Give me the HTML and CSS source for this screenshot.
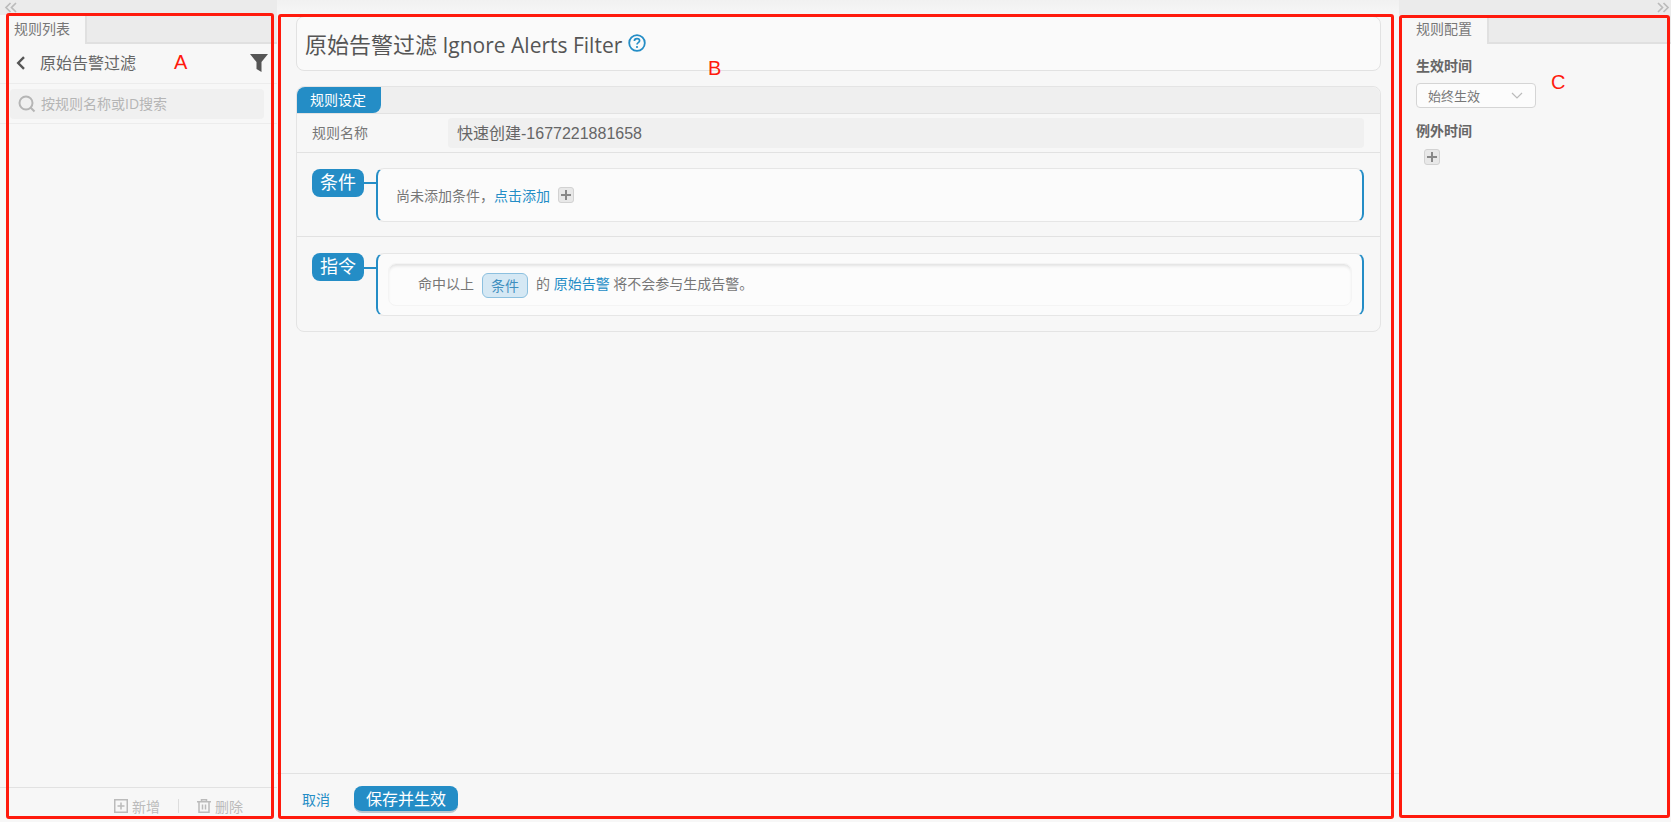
FILE: index.html
```html
<!DOCTYPE html>
<html lang="zh-CN">
<head>
  <meta charset="UTF-8" />
  <title>原始告警过滤</title>
  <link rel="stylesheet" href="styles.css">
</head>
<body>

<div class="page">
  <aside class="left">
    <div class="collapse-bar">
      <svg width="14" height="11" viewBox="0 0 14 11"><path d="M6.500 1 2 5.500 6.500 10M12 1 7.500 5.500 12 10" fill="none" stroke="#bbb" stroke-width="1.700"/></svg>
    </div>
    <div class="tabs">
      <div class="tab">规则列表</div>
    </div>
    <div class="list-head">
      <svg width="10" height="14" viewBox="0 0 10 14"><path d="M8 1.200 2.200 7 8 12.800" fill="none" stroke="#555" stroke-width="2.400"/></svg>
      <span class="list-title">原始告警过滤</span>
      <svg class="filter" width="18" height="18" viewBox="0 0 18 18"><path d="M0 0h18L11.500 8v10l-5-3V8z" fill="#555"/></svg>
    </div>
    <div class="search-row">
      <div class="search">
        <svg width="18" height="18" viewBox="0 0 18 18"><circle cx="8" cy="8" r="6.500" fill="none" stroke="#b5b5b5" stroke-width="2"/><path d="m12.500 12.500 4 4" stroke="#b5b5b5" stroke-width="2"/></svg>
        <span class="search-text">按规则名称或ID搜索</span>
      </div>
    </div>
    <div class="list-body"></div>
    <div class="list-foot">
      <span class="foot-btn">
        <svg width="14" height="14" viewBox="0 0 14 14"><path d="M.75.75h12.500v12.500H.75zM7 3.500v7M3.500 7h7" fill="none" stroke="#bbb" stroke-width="1.500"/></svg>
        新增
      </span>
      <span class="foot-sep"></span>
      <span class="foot-btn">
        <svg width="14" height="14" viewBox="0 0 14 14"><path d="M0 2.750h14M4.500 2.500V.75h5V2.500M2 3v10.250h10V3M5.500 5.500v5M8.500 5.500v5" fill="none" stroke="#bbb" stroke-width="1.500"/></svg>
        删除
      </span>
    </div>
  </aside>

  <main class="center">
    <div class="center-top"></div>
    <div class="center-body">
      <div class="title-card">
        <h1><span class="title-cn">原始告警过滤</span> Ignore Alerts Filter</h1>
        <svg width="18" height="18" viewBox="0 0 18 18"><circle cx="9" cy="9" r="7.800" fill="none" stroke="#248dc6" stroke-width="1.800"/><path d="M6.400 7c0-1.600 1.200-2.400 2.600-2.400s2.600.8 2.600 2.200c0 1.800-2.600 1.800-2.600 3.600" fill="none" stroke="#248dc6" stroke-width="1.700"/><circle cx="9" cy="13" r="1.100" fill="#248dc6"/></svg>
      </div>

      <section class="rule">
        <div class="rule-tabs"><div class="rule-tab">规则设定</div></div>
        <div class="name-row">
          <label class="name-label">规则名称</label>
          <div class="name-input">快速创建-1677221881658</div>
        </div>
        <div class="block block-cond">
          <div class="badge">条件</div>
          <div class="link-line"></div>
          <div class="card">
            <div class="cond-line">
              <span>尚未添加条件，<a class="blue">点击添加</a></span>
              <span class="plus"><svg width="10" height="10" viewBox="0 0 10 10"><path d="M5 0v10M0 5h10" stroke="#888" stroke-width="2"/></svg></span>
            </div>
          </div>
        </div>
        <div class="block block-cmd">
          <div class="badge">指令</div>
          <div class="link-line"></div>
          <div class="card">
            <div class="inner">命中以上<span class="chip">条件</span>的 <a class="blue">原始告警</a> 将不会参与生成告警。</div>
          </div>
        </div>
      </section>
    </div>
    <div class="center-foot">
      <a class="blue cancel">取消</a>
      <button class="save">保存并生效</button>
    </div>
  </main>

  <aside class="right">
    <div class="collapse-bar collapse-right">
      <svg width="14" height="11" viewBox="0 0 14 11"><path d="M7.500 1 12 5.500 7.500 10M2 1l4.500 4.500L2 10" fill="none" stroke="#bbb" stroke-width="1.700"/></svg>
    </div>
    <div class="tabs">
      <div class="tab">规则配置</div>
    </div>
    <div class="config">
      <div class="config-label">生效时间</div>
      <div class="select">
        <span>始终生效</span>
        <svg width="12" height="7" viewBox="0 0 12 7"><path d="M1 1l5 5 5-5" fill="none" stroke="#bbb" stroke-width="1.200"/></svg>
      </div>
      <div class="config-label label-gap">例外时间</div>
      <span class="plus plus-config"><svg width="10" height="10" viewBox="0 0 10 10"><path d="M5 0v10M0 5h10" stroke="#888" stroke-width="2"/></svg></span>
    </div>
  </aside>
</div>

<!-- red marks drawn over the screenshot -->
<div class="mark mark-a"></div>
<div class="mark mark-b"></div>
<div class="mark mark-c"></div>
<span class="mark-letter letter-a">A</span>
<span class="mark-letter letter-b">B</span>
<span class="mark-letter letter-c">C</span>

</body>
</html>
```

FILE: styles.css
```css
* {
  box-sizing: border-box;
}
html, body {
  margin: 0;
  height: 100%;
  overflow: hidden;
}
body {
  position: relative;
  background: #f7f7f7;
  color: #777;
  font-family: "Open Sans", "Noto Sans CJK SC", sans-serif;
  font-size: 14px;
}
.page {
  display: flex;
  height: 822px;
}
.blue {
  color: #248dc6;
}

/* side panels */
.left {
  width: 277px;
  display: flex;
  flex-direction: column;
}
.right {
  width: 272px;
  display: flex;
  flex-direction: column;
}
.collapse-bar {
  height: 15px;
  background: #ebebeb;
  display: flex;
  align-items: center;
  padding-left: 4px;
}
.collapse-right {
  justify-content: flex-end;
  padding: 0 1px 0 0;
}
.tabs {
  height: 29px;
  background: #ebebeb;
  border-bottom: 2px solid #e0e0e0;
  display: flex;
}
.tab {
  width: 87px;
  height: 29px;
  padding-left: 14px;
  background: #f7f7f7;
  border-right: 2px solid #e0e0e0;
  line-height: 27px;
}
.right .tab {
  width: 90px;
  padding-left: 17px;
}
.list-head {
  height: 40px;
  display: flex;
  align-items: center;
  padding: 0 9px 1px 16px;
  border-bottom: 1px solid #ececec;
}
.list-title {
  flex: 1;
  margin-left: 14px;
  font-size: 16px;
  line-height: 20px;
  color: #666;
  padding-bottom: 1px;
}
.search-row {
  height: 40px;
  padding: 5px 13px 0 10px;
  border-bottom: 1px solid #ececec;
}
.search {
  height: 30px;
  border-radius: 4px;
  background: #f0f0f0;
  display: flex;
  align-items: center;
  gap: 5px;
  padding-left: 8px;
  color: #b5b5b5;
}
.search-text {
  padding-bottom: 2px;
}
.list-body {
  flex: 1;
}
.list-foot {
  height: 35px;
  border-top: 1px solid #e2e2e2;
  display: flex;
  align-items: center;
  justify-content: flex-end;
  gap: 18px;
  padding: 1px 34px 0 0;
}
.foot-btn {
  display: flex;
  align-items: center;
  gap: 4px;
  color: #bbb;
}
.foot-sep {
  width: 1px;
  height: 14px;
  background: #ddd;
}

/* center column */
.center {
  flex: 1;
  display: flex;
  flex-direction: column;
  min-width: 0;
}
.center-top {
  height: 16px;
  background: linear-gradient(#f1f1f1, #f7f7f7);
}
.center-body {
  flex: 1;
  padding: 0 18px 0 19px;
}
.title-card {
  height: 55px;
  background: #fafafa;
  border: 1px solid #e2e2e2;
  border-radius: 8px;
  display: flex;
  align-items: center;
  gap: 6px;
  padding: 0 8px 2px;
}
h1 {
  margin: 0;
  font-size: 21px;
  font-weight: 400;
  color: #555;
}
.title-cn {
  font-size: 22px;
}
.rule {
  margin-top: 15px;
  height: 246px;
  border: 1px solid #e4e4e4;
  border-radius: 8px;
}
.rule-tabs {
  height: 27px;
  background: #efefef;
  border-bottom: 1px solid #e2e2e2;
  border-radius: 8px 8px 0 0;
}
.rule-tab {
  width: 84px;
  height: 26px;
  background: #248dc6;
  border-radius: 8px 0 8px 0;
  color: #fff;
  text-align: center;
  line-height: 26px;
  padding-right: 2px;
}
.name-row {
  height: 39px;
  display: flex;
  align-items: center;
  padding: 0 16px 0 15px;
  border-bottom: 1px solid #e2e2e2;
}
.name-label {
  width: 136px;
  padding-bottom: 2px;
}
.name-input {
  flex: 1;
  height: 30px;
  line-height: 31px;
  background: #f0f0f0;
  border-radius: 4px;
  padding-left: 9px;
  font-family: "Liberation Sans", "Noto Sans CJK SC", sans-serif;
  font-size: 16px;
  color: #666;
}
.block {
  display: flex;
  align-items: flex-start;
  padding: 15px 16px 0 15px;
}
.block-cond {
  height: 84px;
  border-bottom: 1px solid #e2e2e2;
}
.block-cmd {
  padding-top: 16px;
}
.badge {
  width: 52px;
  height: 28px;
  background: #248dc6;
  border-radius: 8px;
  color: #fff;
  font-size: 18px;
  text-align: center;
  line-height: 26px;
}
.block-cond .badge {
  margin-top: 1px;
}
.link-line {
  width: 12px;
  height: 2px;
  margin-top: 14px;
  background: #248dc6;
}
.card {
  flex: 1;
  background: #fbfbfb;
  border: 1px solid #e6e6e6;
  border-left: 2px solid #248dc6;
  border-right: 2px solid #248dc6;
  border-radius: 8px;
}
.block-cond .card {
  height: 54px;
}
.block-cmd .card {
  height: 63px;
  padding: 9px 10px 0;
}
.cond-line {
  display: flex;
  align-items: center;
  gap: 8px;
  height: 51px;
  padding-left: 18px;
}
.plus {
  width: 16px;
  height: 16px;
  display: flex;
  align-items: center;
  justify-content: center;
  background: #e8e8e8;
  border: 1px solid #d2d2d2;
  border-radius: 3px;
}
.inner {
  height: 43px;
  padding-left: 29px;
  line-height: 40px;
  white-space: pre;
  border-radius: 8px;
  background: #fcfcfc;
  border: 1px solid #f4f4f4;
  box-shadow: inset 0 3px 3px -1px #e2e2e2;
}
.chip {
  display: inline-block;
  height: 25px;
  line-height: 23px;
  width: 46px;
  margin: 0 8px;
  vertical-align: middle;
  text-align: center;
  background: #d5e8f4;
  border: 1px solid #8cc0df;
  border-radius: 6px;
  color: #3f8fbf;
}
.center-foot {
  height: 49px;
  border-top: 1px solid #e2e2e2;
  display: flex;
  align-items: center;
  padding: 3px 25px 0;
  gap: 24px;
}
.cancel {
  padding-bottom: 2px;
}
.save {
  width: 104px;
  height: 27px;
  padding: 0;
  border: none;
  border-bottom: 2px solid #b9c6cf;
  border-radius: 8px;
  background: #248dc6;
  color: #fff;
  font-family: inherit;
  font-size: 16px;
  line-height: 24px;
}

/* right config */
.config {
  padding: 13px 17px;
}
.config-label {
  font-weight: 700;
  color: #666;
  line-height: 18px;
}
.label-gap {
  margin-top: 14px;
}
.select {
  width: 120px;
  height: 25px;
  margin-top: 8px;
  display: flex;
  align-items: center;
  justify-content: space-between;
  padding: 0 12px 0 11px;
  font-size: 13px;
  background: #fcfcfc;
  border: 1px solid #d5d5d5;
  border-radius: 4px;
}
.plus-config {
  margin: 9px 0 0 8px;
}

/* annotation boxes and letters */
.mark {
  position: absolute;
  border: 3px solid #ff1a0d;
  border-radius: 3px;
}
.mark-a {
  left: 6px;
  top: 13px;
  width: 268px;
  height: 806px;
}
.mark-b {
  left: 278px;
  top: 14px;
  width: 1116px;
  height: 805px;
}
.mark-c {
  left: 1399px;
  top: 15px;
  width: 271px;
  height: 803px;
}
.mark-letter {
  position: absolute;
  color: #ff1a0d;
  font: 20px "Liberation Sans", sans-serif;
}
.letter-a {
  left: 174px;
  top: 51px;
}
.letter-b {
  left: 708px;
  top: 57px;
}
.letter-c {
  left: 1551px;
  top: 71px;
}
```
